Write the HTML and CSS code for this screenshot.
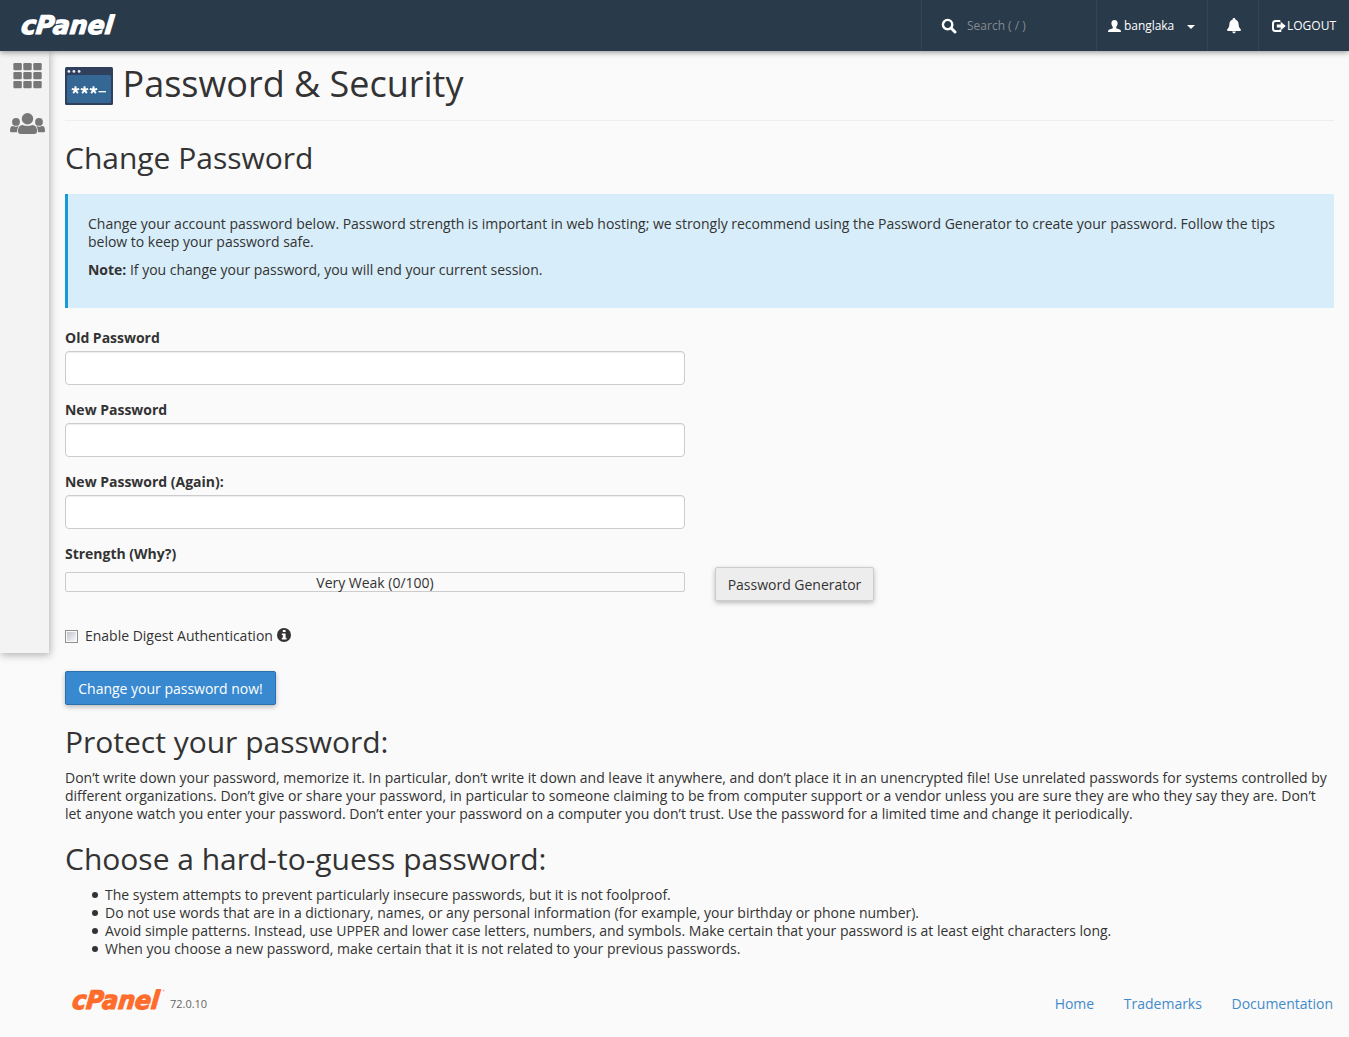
FILE: index.html
```html
<!DOCTYPE html>
<html lang="en">
<head>
<meta charset="utf-8">
<title>cPanel - Password &amp; Security</title>
<link rel="stylesheet" href="styles.css">
</head>
<body>
<header class="topbar">
  <a class="brand" aria-label="cPanel">
    <svg width="104" height="40" viewBox="0 0 104 40"><text class="wordmark" transform="translate(2.500 28.300) skewX(-6)" textLength="92" lengthAdjust="spacingAndGlyphs">cPanel</text></svg>
  </a>
  <nav class="tools">
    <div class="tool search">
      <svg width="16" height="16" viewBox="0 0 16 16" fill="none" stroke="#fff"><circle cx="6.600" cy="6.600" r="4.700" stroke-width="2.400"/><path d="M10 10l4 4" stroke-width="3" stroke-linecap="round"/></svg>
      <span class="hint">Search ( / )</span>
    </div>
    <div class="tool user">
      <svg width="13" height="12" viewBox="0 0 13 12" fill="#fff"><path d="M6.500 0C8.600 0 9.700 1.400 9.600 3.500C9.500 5.200 8.900 6 8.200 6.900V8.200L11.600 9.600C12.500 10 12.900 10.500 13 12H0C.1 10.500.5 10 1.400 9.600L4.800 8.200V6.900C4.100 6 3.500 5.200 3.400 3.500C3.300 1.400 4.400 0 6.500 0Z"/></svg>
      <span class="username">banglaka</span>
      <span class="caret"></span>
    </div>
    <div class="tool bell">
      <svg width="14" height="16" viewBox="0 0 14 16" fill="#fff"><path d="M7 0a1.300 1.300 0 0 1 1.300 1.500C10.600 2.100 11.400 3.800 11.600 6C11.800 9 12.400 10 13.700 11.200Q14.200 12 13.400 13H.6Q-.2 12 .3 11.200C1.600 10 2.200 9 2.400 6C2.600 3.800 3.400 2.100 5.700 1.500A1.300 1.300 0 0 1 7 0ZM5.200 13.600h3.600A1.800 1.800 0 0 1 5.200 13.600Z"/></svg>
    </div>
    <div class="tool logout">
      <svg width="14" height="12" viewBox="0 0 14 12"><path d="M8.300 1H3.500Q1 1 1 3.500v5Q1 11 3.500 11H8.300V9.400" fill="none" stroke="#fff" stroke-width="2"/><path d="M8.700 1.800L13.800 6 8.700 10.200V7.600H4.800V4.400H8.700Z" fill="#fff"/></svg>
      <span>LOGOUT</span>
    </div>
  </nav>
</header>
<div class="page">
  <aside class="sidebar">
    <svg width="29" height="26" viewBox="0 0 29 26" fill="#777"><rect x=".4" width="8.400" height="7.200" rx="1.200"/><rect x="10.300" width="8.400" height="7.200" rx="1.200"/><rect x="20.300" width="8.400" height="7.200" rx="1.200"/><rect x=".4" y="9" width="8.400" height="7.200" rx="1.200"/><rect x="10.300" y="9" width="8.400" height="7.200" rx="1.200"/><rect x="20.300" y="9" width="8.400" height="7.200" rx="1.200"/><rect x=".4" y="18" width="8.400" height="7.200" rx="1.200"/><rect x="10.300" y="18" width="8.400" height="7.200" rx="1.200"/><rect x="20.300" y="18" width="8.400" height="7.200" rx="1.200"/></svg>
    <svg class="people" width="35" height="22" viewBox="0 0 35 22" fill="#777"><circle cx="17.500" cy="5.700" r="5.700"/><path d="M12.500 12Q17.500 14.200 22.500 12Q27 12 27 18.500Q27 21 24 21H11Q8 21 8 18.500Q8 12 12.500 12Z"/><circle cx="6" cy="8.900" r="3.900"/><circle cx="29" cy="8.900" r="3.900"/><path d="M2.700 13Q6 14.600 8.800 13.100Q7 15 6.900 19.200H1.200Q0 19.200 0 18Q0 13 2.700 13ZM32.300 13Q29 14.600 26.200 13.100Q28 15 28.100 19.200H33.800Q35 19.200 35 18Q35 13 32.300 13Z"/></svg>
  </aside>
  <main class="content">
    <h1 class="page-title">
      <svg width="48" height="38" viewBox="0 0 48 38"><rect width="48" height="38" rx="1.500" fill="#303f5c"/><rect x="2" y="8" width="44" height="28" rx="1.500" fill="#346794"/><g fill="#e8ebef"><circle cx="3.900" cy="4.400" r="1.400"/><circle cx="8.900" cy="4.400" r="1.400"/><circle cx="14.100" cy="4.400" r="1.400"/></g><path d="M10.500 23V19.200M10.500 23l-3.700-1.200M10.500 23l3.700-1.200M10.500 23l-2.300 3.200M10.500 23l2.300 3.200M19.500 23V19.200M19.500 23l-3.700-1.200M19.500 23l3.700-1.200M19.500 23l-2.300 3.200M19.500 23l2.300 3.200M28.500 23V19.200M28.500 23l-3.700-1.200M28.500 23l3.700-1.200M28.500 23l-2.300 3.200M28.500 23l2.300 3.200" stroke="#fff" stroke-width="1.900"/><path d="M33.500 24.700H41" stroke="#fff" stroke-width="1.300"/></svg>
      <span>Password &amp; Security</span>
    </h1>
    <h2 class="section-title">Change Password</h2>
    <div class="callout">
      <p>Change your account password below. Password strength is important in web hosting; we strongly recommend using the Password Generator to create your password. Follow the tips below to keep your password safe.</p>
      <p><strong>Note:</strong> If you change your password, you will end your current session.</p>
    </div>
    <form class="form">
      <label class="field">Old Password<input class="input" type="password"></label>
      <label class="field">New Password<input class="input" type="password"></label>
      <label class="field">New Password (Again):<input class="input" type="password"></label>
      <div class="strength-row">
        <div class="strength"><span class="strength-label">Strength (Why?)</span><div class="meter">Very Weak (0/100)</div></div>
        <button class="button generator" type="button">Password Generator</button>
      </div>
      <label class="digest"><input class="check" type="checkbox"><span>Enable Digest Authentication</span>
        <svg width="14" height="14" viewBox="0 0 14 14"><circle cx="7" cy="7" r="7" fill="#333"/><path d="M5.800 2h2.800v2H5.800ZM4.800 5.400h3.800V9.700H9.500V11.400H4.800V9.700H5.800V7H4.800Z" fill="#fff"/></svg>
      </label>
      <button class="button primary" type="button">Change your password now!</button>
    </form>
    <h2 class="tips-title">Protect your password:</h2>
    <p class="tips">Don’t write down your password, memorize it. In particular, don’t write it down and leave it anywhere, and don’t place it in an unencrypted file! Use unrelated passwords for systems controlled by different organizations. Don’t give or share your password, in particular to someone claiming to be from computer support or a vendor unless you are sure they are who they say they are. Don’t let anyone watch you enter your password. Don’t enter your password on a computer you don’t trust. Use the password for a limited time and change it periodically.</p>
    <h2 class="tips-title choose">Choose a hard-to-guess password:</h2>
    <ul class="rules">
      <li>The system attempts to prevent particularly insecure passwords, but it is not foolproof.</li>
      <li>Do not use words that are in a dictionary, names, or any personal information (for example, your birthday or phone number).</li>
      <li>Avoid simple patterns. Instead, use UPPER and lower case letters, numbers, and symbols. Make certain that your password is at least eight characters long.</li>
      <li>When you choose a new password, make certain that it is not related to your previous passwords.</li>
    </ul>
    <footer class="footer">
      <div class="product">
        <svg width="100" height="40" viewBox="0 0 100 40"><text class="wordmark orange" transform="translate(2.500 28.300) skewX(-6)" textLength="87" lengthAdjust="spacingAndGlyphs">cPanel</text><circle cx="94.500" cy="9.500" r="1" fill="#ffb593"/></svg>
        <span class="version">72.0.10</span>
      </div>
      <nav class="links"><a>Home</a><a>Trademarks</a><a>Documentation</a></nav>
    </footer>
  </main>
</div>
</body>
</html>
```
FILE: styles.css
```css
* { box-sizing: border-box; }
body {
  margin: 0;
  background: #fafafa;
  color: #333;
  font: 14px/18px "Open Sans", sans-serif;
}
svg { display: block; flex: none; }
p, h1, h2, ul { margin: 0; }

.topbar {
  position: relative;
  display: flex;
  justify-content: space-between;
  height: 51px;
  background: #293a4a;
  box-shadow: 0 1px 6px rgba(0, 0, 0, .45);
}
.brand { padding: 6px 0 0 18px; }
.wordmark {
  font: italic 700 25.5px "DejaVu Sans", sans-serif;
  fill: #fff;
  stroke: #fff;
  stroke-width: 1.2px;
  stroke-linejoin: round;
}
.wordmark.orange { fill: #ff6c2c; stroke: #ff6c2c; }
.tools { display: flex; color: #fff; font-size: 12px; }
.tool {
  display: flex;
  align-items: center;
  border-left: 1px solid #32455a;
}
.search { width: 175px; padding-left: 19px; gap: 10px; }
.hint { color: #848a8e; }
.user { width: 111px; padding-left: 11px; }
.username { margin-left: 3px; letter-spacing: -.05px; }
.caret {
  margin: 3px 0 0 13px;
  border: 4px solid transparent;
  border-top-color: #fff;
  border-bottom: 0;
}
.bell { width: 51px; justify-content: center; padding-left: 2px; }
.logout { width: 91px; padding-left: 13px; gap: 1px; }

.page { display: flex; align-items: flex-start; }
.sidebar {
  flex: none;
  width: 49px;
  height: 602px;
  padding: 12px 0 0 13px;
  background: #f3f3f3;
  box-shadow: 1px 2px 8px rgba(0, 0, 0, .3);
}
.people { margin: 24px 0 0 -3px; }
.content { flex: 1; padding: 0 15px 0 16px; letter-spacing: -.0115px; }

.page-title {
  display: flex;
  gap: 9.5px;
  height: 70px;
  padding-top: 16px;
  border-bottom: 1px solid #eee;
  font-size: 36px;
  font-weight: 400;
  line-height: 34px;
}
.section-title, .tips-title {
  font-size: 30px;
  font-weight: 400;
  line-height: 33px;
}
.section-title { margin: 20px 0; }
.callout {
  height: 114px;
  padding: 21px 20px;
  background: #d7edf9;
  border-left: 3px solid #179bd7;
}
.callout p + p { margin-top: 10px; }
.form { padding-top: 21px; }
.field {
  display: block;
  width: 620px;
  margin-bottom: 16px;
  font-weight: 700;
}
.input {
  display: block;
  width: 100%;
  height: 34px;
  margin-top: 4px;
  background: #fff;
  border: 1px solid #ccc;
  border-radius: 4px;
  box-shadow: inset 0 1px 1px rgba(0, 0, 0, .075);
}
.strength-row { display: flex; gap: 30px; }
.strength { width: 620px; }
.strength-label { display: block; font-weight: 700; }
.meter {
  height: 20px;
  margin-top: 9px;
  border: 1px solid #ccc;
  border-radius: 2px;
  line-height: 20px;
  text-align: center;
}
.button {
  height: 34px;
  padding: 2px 0 0;
  border: 1px solid #ccc;
  border-radius: 2px;
  font: 14px/18px "Open Sans", sans-serif;
  letter-spacing: -.0115px;
  white-space: nowrap;
  box-shadow: 0 2px 5px rgba(0, 0, 0, .26);
}
.generator { width: 159px; margin-top: 22px; background: #ededed; color: #333; }
.digest { display: flex; align-items: center; height: 18px; margin: 26px 0; }
.check {
  appearance: none;
  width: 13px;
  height: 13px;
  margin: 1px 7px 0 0;
  background: linear-gradient(135deg, #c0c4cc, #f8f8f8) content-box #f4f4f4;
  padding: 1px;
  border: 1px solid #8e8f8f;
}
.digest svg { margin: -2px 0 0 4px; }
.primary { display: block; width: 211px; background: #3889d0; border-color: #2c6fae; color: #fff; }
.tips-title { margin: 20px 0 11px; }
.tips-title.choose { margin-top: 19px; }
.rules { padding-left: 27px; list-style: none; }
.rules li { display: flex; align-items: center; gap: 7px; }
.rules li::before {
  content: "";
  flex: none;
  width: 6px;
  height: 6px;
  border-radius: 50%;
  background: #333;
}
.footer {
  display: flex;
  justify-content: space-between;
  padding: 23px 1px 0 4px;
}
.product { display: flex; gap: 1px; }
.version { padding-top: 14px; color: #666; font-size: 11px; }
.links { display: flex; gap: 29.7px; padding-top: 14px; color: #428bca; }
```
